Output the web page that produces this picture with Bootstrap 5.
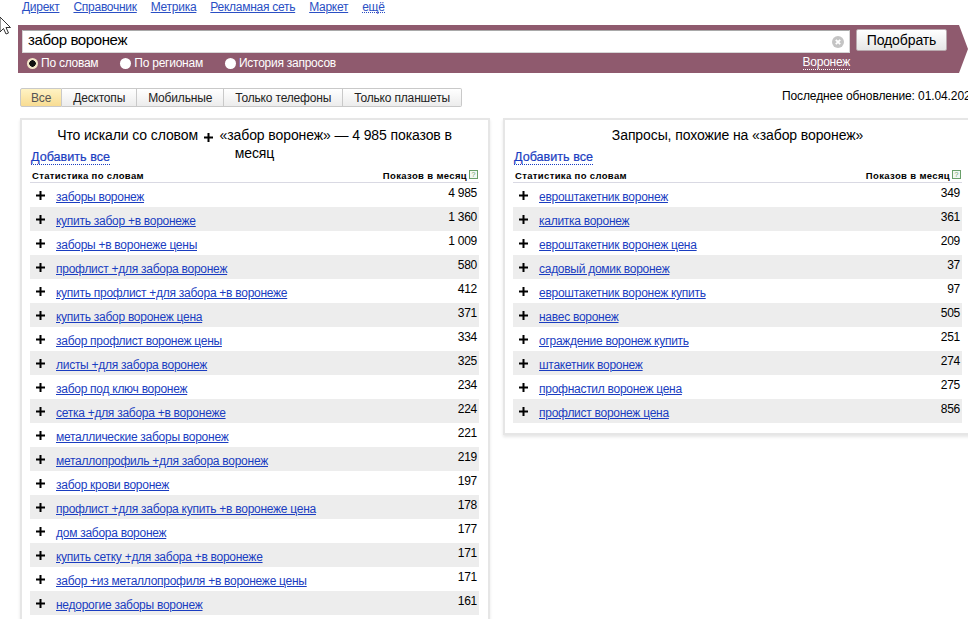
<!DOCTYPE html>
<html lang="en">
<head>
  <meta charset="UTF-8" />
  <meta name="viewport" content="width=device-width, initial-scale=1" />
  <title>Подбор слов</title>
  <link rel="stylesheet" href="https://cdn.jsdelivr.net/npm/bootstrap@5.3.0/dist/css/bootstrap.min.css" />
  <style>
    html, body { height: 619px; overflow: hidden; }
    body { font-family: "Liberation Sans", Arial, sans-serif; font-size: 12px; color: #000; background: #fff; width: 968px; position: relative; }
    a { color: #1a3dc1; }

    .top-links { gap: 14px; padding: 0 0 0 22px; height: 25px; line-height: 14px; letter-spacing: -.27px; }
    .top-links a { color: #2a4fc4; }
    .top-links a.more { text-decoration: none; border-bottom: 1px dotted #2a4fc4; height: 13px; }
    .cursor-pic { position: absolute; left: -1px; top: 16px; }

    .search-bar { margin-left: 18px; width: 954px; height: 48px; background: #8f5a6e; padding: 5px 0 0 4px; clip-path: polygon(0 0, 941px 0, 950px 24px, 941px 48px, 0 48px); }
    .query-box { width: 828px; height: 23px; background: #fff; border: 1px solid #d6d6d6; border-top-color: #a9a9a9; padding: 0 0 3px 5px; font-size: 15px; line-height: 18px; letter-spacing: -.38px; }
    .clear-x { width: 12px; height: 12px; margin: 3px 5px 0 0; }
    .pick-btn { width: 91px; height: 22px; margin: -1px 0 0 6px; background: linear-gradient(#fff, #e6e6e6); border: 1px solid #b9a8ae; border-radius: 2px; font-size: 14px; line-height: 18px; padding: 0; color: #000; letter-spacing: -.1px; }
    .mode-row { color: #fff; height: 20px; width: 828px; padding-left: 5px; letter-spacing: -.25px; }
    .mode-item { margin-right: 22px; }
    .dot-radio { width: 11px; height: 11px; border-radius: 50%; background: #fff; margin-right: 3px; display: inline-block; }
    .dot-radio.on { background: radial-gradient(circle, #111 0 3px, #f3e6c8 3.5px); }
    .region-link { color: #fff; text-decoration: none; border-bottom: 1px dotted #fff; line-height: 13px; }

    .tabs-row { margin: 15px 0 0 20px; height: 20px; flex-wrap: nowrap; }
    .tab-group { height: 19px; flex: none; }
    .tab-group .tab-item { border: 1px solid #c9c9c9; border-left-width: 0; background: linear-gradient(#fff, #ececec); padding: 0 11px; line-height: 18px; color: #222; white-space: nowrap; letter-spacing: -.17px; }
    .tab-group .tab-item:first-child { border-left-width: 1px; background: linear-gradient(#fff3c4, #f8dc92); color: #555; padding: 0 10px; border-radius: 2px 0 0 2px; }
    .tab-group .tab-item:last-child { border-radius: 0 2px 2px 0; }
    .last-update { margin-left: 320px; white-space: nowrap; line-height: 16px; flex: none; letter-spacing: -.1px; }

    .panels { margin: 10px 0 0 20px; gap: 13px; width: 975px; align-items: flex-start; }
    .stat-panel { width: 470px; flex: none; background: #fff; border: 2px solid #e6e6e6; border-right-width: 2px; box-shadow: 0 2px 3px rgba(0,0,0,.1); padding: 5px 9px 10px 8px; }
    .panel-title { font-size: 14px; line-height: 18px; text-align: center; padding: 1px 20px 0; height: 20px; letter-spacing: -.1px; }
    .panel-title .plus-pic { margin: 0 3px 0 2px; vertical-align: -2px; }
    .add-all { font-size: 12.6px; -webkit-text-stroke: .2px; text-decoration: none; border-bottom: 1px dotted #1a3dc1; margin-left: 1px; line-height: 14px; display: inline-block; }
    .add-row { height: 18px; margin-top: 3px; }
    .head-row { font-size: 9.5px; font-weight: 700; letter-spacing: .35px; border-bottom: 1px solid #d9d9e3; height: 13px; line-height: 12px; margin-top: 4px; padding: 0 1px 0 2px; }
    .help-box { width: 9px; height: 9px; border: 1px solid #6aa06a; color: #6aa06a; font-size: 7px; line-height: 7px; text-align: center; margin-left: 2px; font-weight: 400; letter-spacing: 0; background: #f2f8f2; }
    .word-row { height: 24px; padding: 0 2px 0 6px; letter-spacing: -.27px; }
    .word-row:nth-child(even) { background: #ededed; }
    .word-row .plus-pic { margin: 8px 11px 0 0; flex: none; }
    .word-row a { line-height: 14px; margin-top: 7px; }
    .word-row .shows { line-height: 14px; margin-top: 3px; }
  </style>
</head>
<body>
  <!-- service links -->
  <div class="top-links d-flex align-items-start">
    <a href="#">Директ</a>
    <a href="#">Справочник</a>
    <a href="#">Метрика</a>
    <a href="#">Рекламная сеть</a>
    <a href="#">Маркет</a>
    <a href="#" class="more">ещё</a>
  </div>
  <svg class="cursor-pic" width="12" height="20" viewBox="0 0 12 20"><path d="M1 1v15l3.5-3.5 2.5 5.5 2.5-1-2.500-5.500h4.500z" fill="#fff" stroke="#333" stroke-width="1"/></svg>

  <!-- search bar -->
  <div class="search-bar">
    <div class="d-flex align-items-start">
      <div class="query-box d-flex align-items-center justify-content-between">
        <span>забор воронеж</span>
        <svg class="clear-x" viewBox="0 0 12 12"><circle cx="6" cy="6" r="6" fill="#c4c4c4"/><path d="M3.800 3.800l4.400 4.400M8.200 3.800l-4.400 4.400" stroke="#fff" stroke-width="1.800"/></svg>
      </div>
      <button class="pick-btn" type="button">Подобрать</button>
    </div>
    <div class="mode-row d-flex align-items-center">
      <span class="mode-item d-flex align-items-center"><i class="dot-radio on"></i>По словам</span>
      <span class="mode-item d-flex align-items-center"><i class="dot-radio"></i>По регионам</span>
      <span class="mode-item d-flex align-items-center"><i class="dot-radio"></i>История запросов</span>
      <a href="#" class="region-link ms-auto">Воронеж</a>
    </div>
  </div>

  <!-- device tabs -->
  <div class="tabs-row d-flex">
    <div class="tab-group d-flex">
      <span class="tab-item">Все</span>
      <span class="tab-item">Десктопы</span>
      <span class="tab-item">Мобильные</span>
      <span class="tab-item">Только телефоны</span>
      <span class="tab-item">Только планшеты</span>
    </div>
    <div class="last-update">Последнее обновление: 01.04.2021</div>
  </div>

  <svg width="0" height="0" class="d-block">
    <symbol id="plus" viewBox="0 0 9 9"><path d="M3.500 0h2v3.500h3.500v2h-3.500v3.500h-2v-3.500h-3.500v-2h3.500z" fill="#000"/></symbol>
  </svg>

  <div class="panels d-flex">
    <!-- left panel -->
    <div class="stat-panel">
      <div class="panel-title">Что искали со словом <svg class="plus-pic" width="9" height="9"><use href="#plus"/></svg> «забор воронеж» — 4 985 показов в месяц</div>
      <div class="add-row"><a href="#" class="add-all">Добавить все</a></div>
      <div class="head-row d-flex justify-content-between"><span>Статистика по словам</span><span class="d-flex">Показов в месяц<span class="help-box">?</span></span></div>
      <div>
        <div class="word-row d-flex"><svg class="plus-pic" width="9" height="9"><use href="#plus"/></svg><a href="#">заборы воронеж</a><span class="shows ms-auto">4 985</span></div>
        <div class="word-row d-flex"><svg class="plus-pic" width="9" height="9"><use href="#plus"/></svg><a href="#">купить забор +в воронеже</a><span class="shows ms-auto">1 360</span></div>
        <div class="word-row d-flex"><svg class="plus-pic" width="9" height="9"><use href="#plus"/></svg><a href="#">заборы +в воронеже цены</a><span class="shows ms-auto">1 009</span></div>
        <div class="word-row d-flex"><svg class="plus-pic" width="9" height="9"><use href="#plus"/></svg><a href="#">профлист +для забора воронеж</a><span class="shows ms-auto">580</span></div>
        <div class="word-row d-flex"><svg class="plus-pic" width="9" height="9"><use href="#plus"/></svg><a href="#">купить профлист +для забора +в воронеже</a><span class="shows ms-auto">412</span></div>
        <div class="word-row d-flex"><svg class="plus-pic" width="9" height="9"><use href="#plus"/></svg><a href="#">купить забор воронеж цена</a><span class="shows ms-auto">371</span></div>
        <div class="word-row d-flex"><svg class="plus-pic" width="9" height="9"><use href="#plus"/></svg><a href="#">забор профлист воронеж цены</a><span class="shows ms-auto">334</span></div>
        <div class="word-row d-flex"><svg class="plus-pic" width="9" height="9"><use href="#plus"/></svg><a href="#">листы +для забора воронеж</a><span class="shows ms-auto">325</span></div>
        <div class="word-row d-flex"><svg class="plus-pic" width="9" height="9"><use href="#plus"/></svg><a href="#">забор под ключ воронеж</a><span class="shows ms-auto">234</span></div>
        <div class="word-row d-flex"><svg class="plus-pic" width="9" height="9"><use href="#plus"/></svg><a href="#">сетка +для забора +в воронеже</a><span class="shows ms-auto">224</span></div>
        <div class="word-row d-flex"><svg class="plus-pic" width="9" height="9"><use href="#plus"/></svg><a href="#">металлические заборы воронеж</a><span class="shows ms-auto">221</span></div>
        <div class="word-row d-flex"><svg class="plus-pic" width="9" height="9"><use href="#plus"/></svg><a href="#">металлопрофиль +для забора воронеж</a><span class="shows ms-auto">219</span></div>
        <div class="word-row d-flex"><svg class="plus-pic" width="9" height="9"><use href="#plus"/></svg><a href="#">забор крови воронеж</a><span class="shows ms-auto">197</span></div>
        <div class="word-row d-flex"><svg class="plus-pic" width="9" height="9"><use href="#plus"/></svg><a href="#">профлист +для забора купить +в воронеже цена</a><span class="shows ms-auto">178</span></div>
        <div class="word-row d-flex"><svg class="plus-pic" width="9" height="9"><use href="#plus"/></svg><a href="#">дом забора воронеж</a><span class="shows ms-auto">177</span></div>
        <div class="word-row d-flex"><svg class="plus-pic" width="9" height="9"><use href="#plus"/></svg><a href="#">купить сетку +для забора +в воронеже</a><span class="shows ms-auto">171</span></div>
        <div class="word-row d-flex"><svg class="plus-pic" width="9" height="9"><use href="#plus"/></svg><a href="#">забор +из металлопрофиля +в воронеже цены</a><span class="shows ms-auto">171</span></div>
        <div class="word-row d-flex"><svg class="plus-pic" width="9" height="9"><use href="#plus"/></svg><a href="#">недорогие заборы воронеж</a><span class="shows ms-auto">161</span></div>
      </div>
    </div>

    <!-- right panel -->
    <div class="stat-panel">
      <div class="panel-title">Запросы, похожие на «забор воронеж»</div>
      <div class="add-row"><a href="#" class="add-all">Добавить все</a></div>
      <div class="head-row d-flex justify-content-between"><span>Статистика по словам</span><span class="d-flex">Показов в месяц<span class="help-box">?</span></span></div>
      <div>
        <div class="word-row d-flex"><svg class="plus-pic" width="9" height="9"><use href="#plus"/></svg><a href="#">евроштакетник воронеж</a><span class="shows ms-auto">349</span></div>
        <div class="word-row d-flex"><svg class="plus-pic" width="9" height="9"><use href="#plus"/></svg><a href="#">калитка воронеж</a><span class="shows ms-auto">361</span></div>
        <div class="word-row d-flex"><svg class="plus-pic" width="9" height="9"><use href="#plus"/></svg><a href="#">евроштакетник воронеж цена</a><span class="shows ms-auto">209</span></div>
        <div class="word-row d-flex"><svg class="plus-pic" width="9" height="9"><use href="#plus"/></svg><a href="#">садовый домик воронеж</a><span class="shows ms-auto">37</span></div>
        <div class="word-row d-flex"><svg class="plus-pic" width="9" height="9"><use href="#plus"/></svg><a href="#">евроштакетник воронеж купить</a><span class="shows ms-auto">97</span></div>
        <div class="word-row d-flex"><svg class="plus-pic" width="9" height="9"><use href="#plus"/></svg><a href="#">навес воронеж</a><span class="shows ms-auto">505</span></div>
        <div class="word-row d-flex"><svg class="plus-pic" width="9" height="9"><use href="#plus"/></svg><a href="#">ограждение воронеж купить</a><span class="shows ms-auto">251</span></div>
        <div class="word-row d-flex"><svg class="plus-pic" width="9" height="9"><use href="#plus"/></svg><a href="#">штакетник воронеж</a><span class="shows ms-auto">274</span></div>
        <div class="word-row d-flex"><svg class="plus-pic" width="9" height="9"><use href="#plus"/></svg><a href="#">профнастил воронеж цена</a><span class="shows ms-auto">275</span></div>
        <div class="word-row d-flex"><svg class="plus-pic" width="9" height="9"><use href="#plus"/></svg><a href="#">профлист воронеж цена</a><span class="shows ms-auto">856</span></div>
      </div>
    </div>
  </div>
  <script src="https://cdn.jsdelivr.net/npm/bootstrap@5.3.0/dist/js/bootstrap.bundle.min.js"></script>
</body>
</html>
